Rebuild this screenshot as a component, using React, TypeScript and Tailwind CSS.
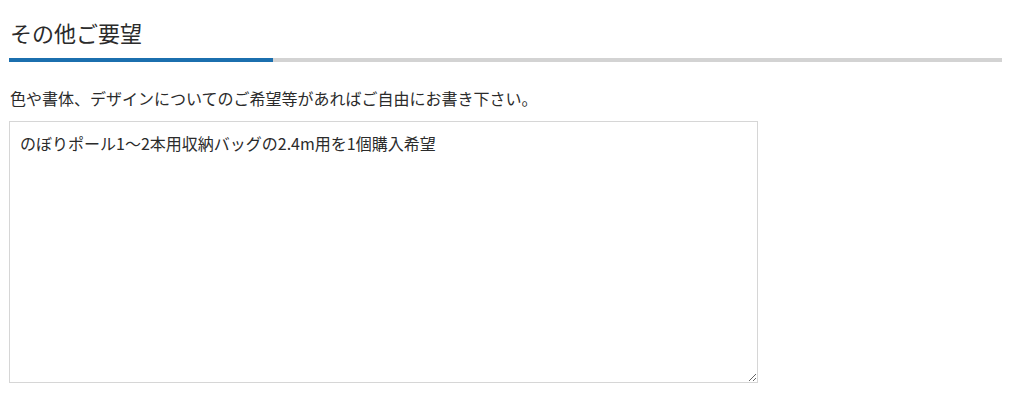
import React from "react";

export default function App() {
  return (
    <div
      className="w-[1024px] h-[420px] bg-white text-[#333]"
      style={{ fontFamily: '"Noto Sans CJK JP", "Noto Sans", sans-serif' }}
    >
      <div className="pl-[9px] pr-[22px] pt-[16px]">
        <h2 className="pl-[1px] text-[22px] leading-[32px] font-normal text-[#2b2b2b]">その他ご要望</h2>
        <div className="mt-[10px] flex h-[4px]">
          <div className="w-[264px] bg-[#1b6fae]" />
          <div className="flex-1 bg-[#d3d3d3]" />
        </div>
        <p className="mt-[24px] pl-[1px] text-[16px] leading-[24px] text-[#2b2b2b]">
          色や書体、デザインについてのご希望等があればご自由にお書き下さい。
        </p>
        <textarea
          className="mt-[11px] block w-[749px] h-[262px] border border-[#d6d6d6] px-[10px] py-[9px] text-[16px] leading-[24px] text-[#2b2b2b] outline-none"
          style={{ fontFamily: '"Noto Sans CJK JP", "Noto Sans", sans-serif' }}
          defaultValue="のぼりポール1〜2本用収納バッグの2.4m用を1個購入希望"
        />
      </div>
    </div>
  );
}
